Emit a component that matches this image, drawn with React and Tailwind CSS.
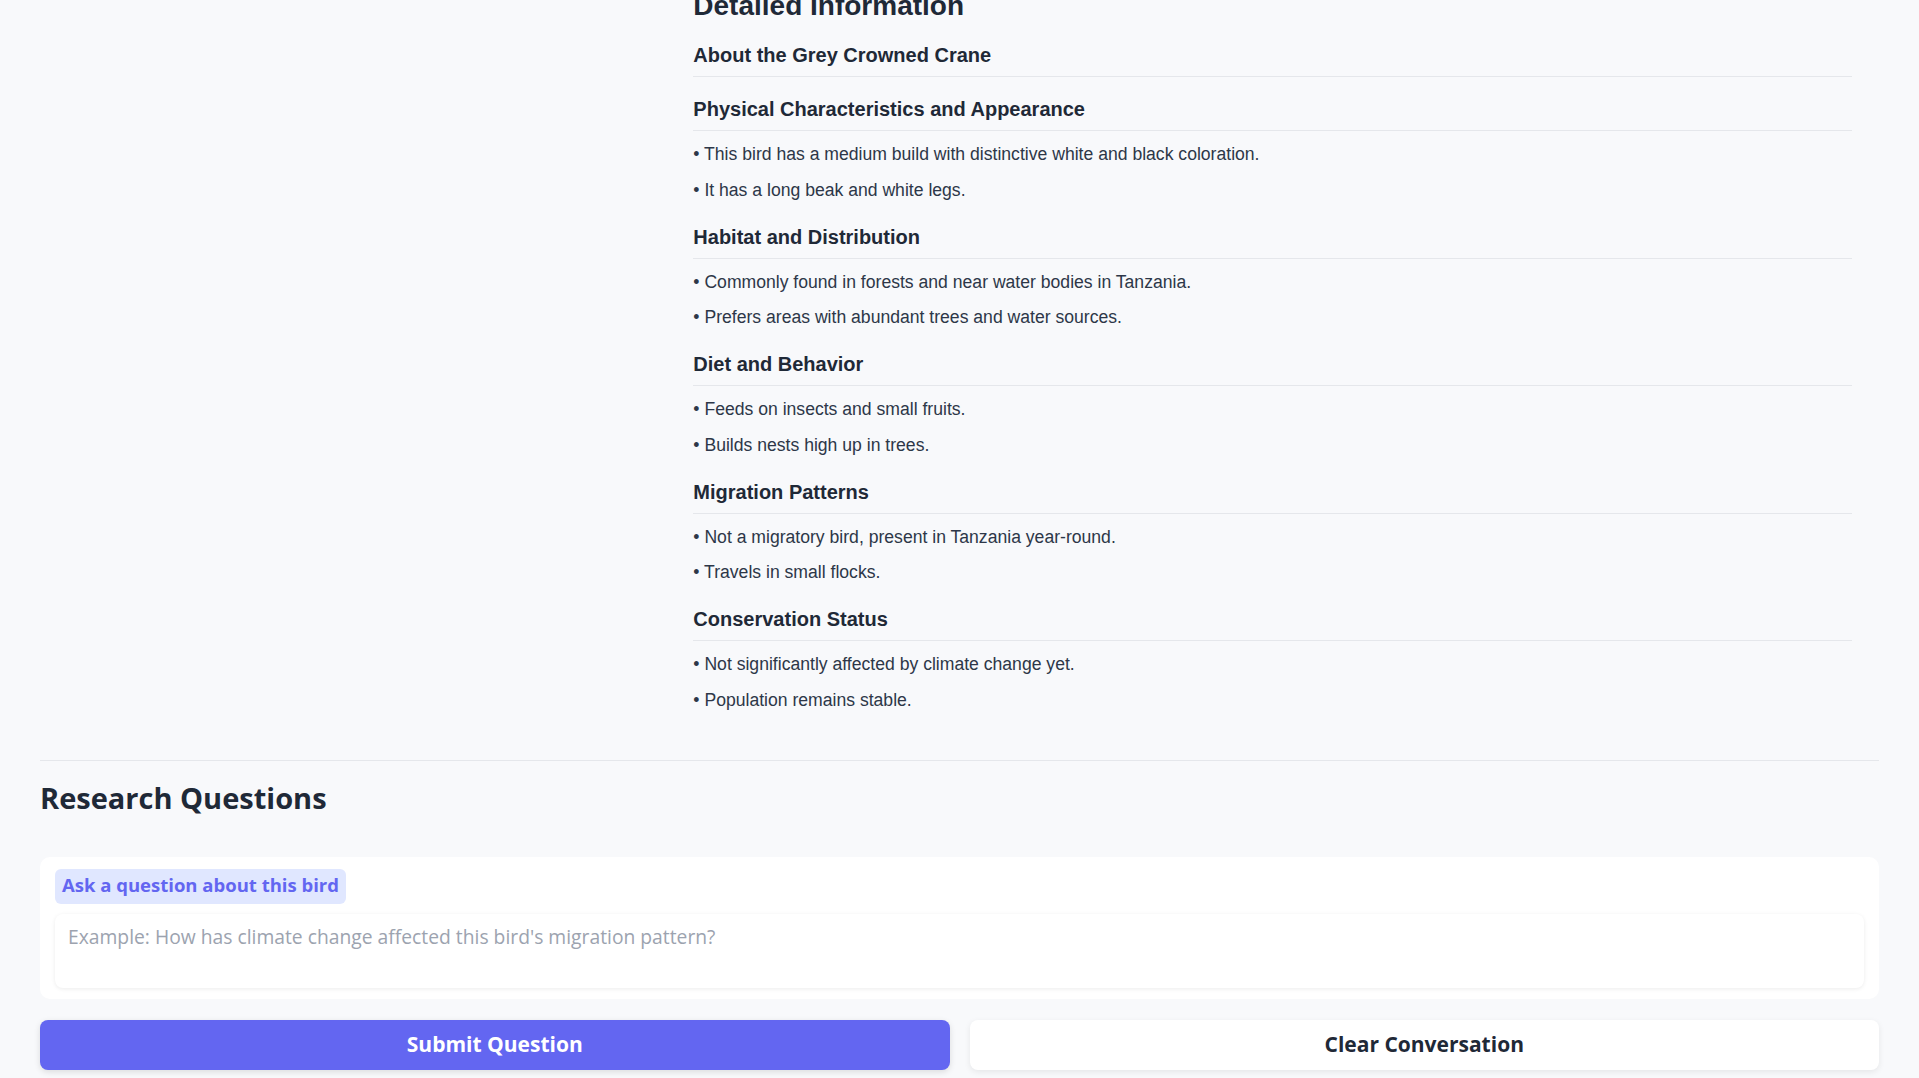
import { useState } from 'react';

const sections = [
  { title: 'About the Grey Crowned Crane', items: [] },
  {
    title: 'Physical Characteristics and Appearance',
    items: [
      'This bird has a medium build with distinctive white and black coloration.',
      'It has a long beak and white legs.',
    ],
  },
  {
    title: 'Habitat and Distribution',
    items: [
      'Commonly found in forests and near water bodies in Tanzania.',
      'Prefers areas with abundant trees and water sources.',
    ],
  },
  {
    title: 'Diet and Behavior',
    items: ['Feeds on insects and small fruits.', 'Builds nests high up in trees.'],
  },
  {
    title: 'Migration Patterns',
    items: ['Not a migratory bird, present in Tanzania year-round.', 'Travels in small flocks.'],
  },
  {
    title: 'Conservation Status',
    items: ['Not significantly affected by climate change yet.', 'Population remains stable.'],
  },
];

const App = () => {
  const [question, setQuestion] = useState('');

  return (
    <div className="min-h-screen overflow-hidden bg-[#f8f9fb]">
      <div className="px-10">
        {/* Top - details column */}
        <div className="grid grid-cols-3 gap-10">
          <div />
          <div className="col-span-2 px-[27px] font-['Liberation_Sans',Arial,sans-serif]">
            <h2 className="-mt-[11px] text-[28px] leading-[34px] font-bold text-[#1f2937]">
              Detailed Information
            </h2>
            <div className="mt-[18px] flex flex-col gap-[18px]">
              {sections.map((section) => (
                <div key={section.title}>
                  <h3 className="text-[20px] leading-7 font-bold text-[#1f2937] pb-[7px] border-b border-[#e5e7eb]">
                    {section.title}
                  </h3>
                  {section.items.length > 0 && (
                    <ul className="mt-[10px] space-y-2">
                      {section.items.map((item) => (
                        <li key={item} className="text-[17.6px] leading-[27.75px] text-[#2d3748]">
                          • {item}
                        </li>
                      ))}
                    </ul>
                  )}
                </div>
              ))}
            </div>
          </div>
        </div>

        {/* Research Questions */}
        <div className="mt-[45px] border-t border-[#e5e7eb] pt-5 font-['Open_Sans',sans-serif]">
          <h2 className="text-[29px] leading-[34px] font-bold text-[#1f2937]">Research Questions</h2>

          <div className="mt-[42px] bg-white rounded-[10px] px-[15px] pt-3 pb-[11px]">
            <label className="inline-block bg-[#e0e7ff] text-[#6366f1] rounded-md px-[7px] pt-[2px] pb-[6px] text-[18.5px] leading-[27px] font-bold">
              Ask a question about this bird
            </label>
            <textarea
              value={question}
              onChange={(e) => setQuestion(e.target.value)}
              placeholder="Example: How has climate change affected this bird's migration pattern?"
              className="mt-[10px] block w-full h-[74px] resize-none rounded-lg bg-white px-[13px] pt-[10px] text-[19.3px] leading-[26px] text-[#1f2937] placeholder:text-[#9ca3af] shadow-[0_1px_4px_rgba(0,0,0,0.08)] outline-none"
            />
          </div>

          <div className="mt-[21px] grid grid-cols-2 gap-5">
            <button className="h-[50px] rounded-lg bg-[#6366f1] text-white text-[21px] font-bold shadow-[0_2px_6px_rgba(0,0,0,0.12)]">
              Submit Question
            </button>
            <button className="h-[50px] rounded-lg bg-white text-[#1f2937] text-[21px] font-bold shadow-[0_2px_6px_rgba(0,0,0,0.08)]">
              Clear Conversation
            </button>
          </div>
        </div>
      </div>
    </div>
  );
};

export default App;
